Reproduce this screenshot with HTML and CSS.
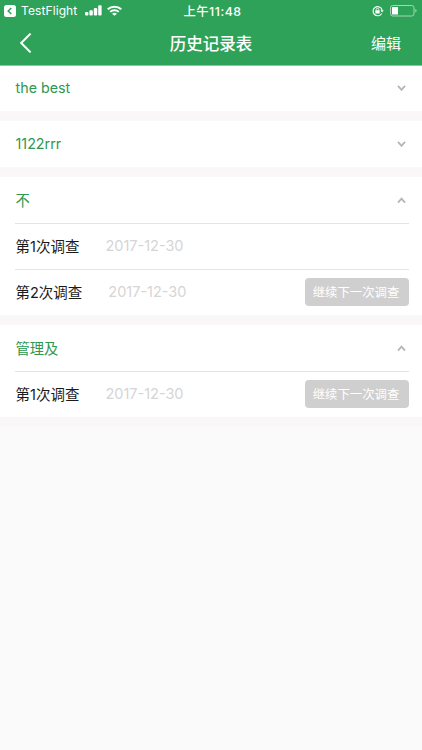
FILE: index.html
```html
<!DOCTYPE html>
<html lang="zh-CN">
<head>
    <meta charset="UTF-8">
    <meta name="viewport" content="width=device-width, initial-scale=1.0">
    <title>历史记录表</title>
    <link rel="stylesheet" href="styles.css">
</head>
<body>

<!-- ===== HEADER ===== -->
<header class="header">
    <div class="status-bar">
        <div class="status-left">
            <svg class="app-back" width="12" height="12" viewBox="0 0 12 12">
                <rect width="12" height="12" rx="2.5" fill="#fff"/>
                <path d="M7.3 3L4.2 6l3.1 3" fill="none" stroke="#2fa259" stroke-width="1.5"/>
            </svg>
            <span class="app-name">TestFlight</span>
            <svg class="signal" width="17" height="11" viewBox="0 0 17 11" fill="#fff">
                <rect x="0" y="7" width="3.4" height="3.6" rx="1"/>
                <rect x="4.4" y="5.2" width="3.4" height="5.4" rx="1"/>
                <rect x="8.8" y="3" width="3.4" height="7.6" rx="1"/>
                <rect x="13.2" y="0.3" width="3.4" height="10.3" rx="1"/>
            </svg>
            <svg class="wifi" width="15" height="11" viewBox="0 0 14 11" preserveAspectRatio="none" fill="none" stroke="#fff" stroke-width="2">
                <path d="M.7 4.2a9 9 0 0 1 12.6 0"/>
                <path d="M3 6.9a5.7 5.7 0 0 1 8 0"/>
                <path d="M7 10.8L4.7 8.7a3.1 3.1 0 0 1 4.6 0z" fill="#fff" stroke="none"/>
            </svg>
        </div>
        <div class="status-time">上午11:48</div>
        <div class="status-right">
            <svg class="lock" width="12" height="12" viewBox="0 0 12 12" fill="none" stroke="#fff">
                <path d="M9.7 8.4A4.6 4.6 0 1 1 10.1 5" stroke-width="1.1"/>
                <path d="M8.5 5.3h3.2L10.1 7.5z" fill="#fff" stroke="none"/>
                <rect x="3.3" y="5.3" width="4.4" height="3.1" rx=".4" fill="#fff" stroke="none"/>
                <path d="M4.2 5.5V4.6a1.3 1.3 0 0 1 2.6 0v.9" stroke-width=".9"/>
            </svg>
            <svg class="battery" width="27" height="12" viewBox="0 0 27 12">
                <rect x=".5" y=".5" width="23.5" height="10.5" rx="2.2" fill="none" stroke="#a5d7b6"/>
                <rect x="2" y="2" width="6" height="7.5" rx=".6" fill="#fff"/>
                <path d="M25.3 4v3.6q1.3-.5 1.3-1.8T25.3 4z" fill="#a5d7b6"/>
            </svg>
        </div>
    </div>
    <div class="nav-bar">
        <a class="nav-back">
            <svg width="12" height="20" viewBox="0 0 12 20" fill="none" stroke="#fff" stroke-width="2">
                <path d="M10.6 .6L1.2 10l9.4 9.4"/>
            </svg>
        </a>
        <h1 class="nav-title">历史记录表</h1>
        <a class="nav-edit">编辑</a>
    </div>
</header>

<!-- ===== RECORD LIST ===== -->
<main class="list">
    <section class="group">
        <div class="row">
            <span class="name">the best</span>
            <svg class="arrow" width="9" height="6" viewBox="0 0 9 6"><path d="M1 .8l3.5 4L8 .8"/></svg>
        </div>
    </section>

    <section class="group">
        <div class="row">
            <span class="name">1122rrr</span>
            <svg class="arrow" width="9" height="6" viewBox="0 0 9 6"><path d="M1 .8l3.5 4L8 .8"/></svg>
        </div>
    </section>

    <section class="group">
        <div class="row">
            <span class="name">不</span>
            <svg class="arrow" width="9" height="6" viewBox="0 0 9 6"><path d="M1 5.6l3.5-4L8 5.6"/></svg>
        </div>
        <div class="row">
            <span class="survey">第1次调查</span>
            <span class="date">2017-12-30</span>
        </div>
        <div class="row">
            <span class="survey">第2次调查</span>
            <span class="date">2017-12-30</span>
            <button class="next">继续下一次调查</button>
        </div>
    </section>

    <section class="group">
        <div class="row">
            <span class="name">管理及</span>
            <svg class="arrow" width="9" height="6" viewBox="0 0 9 6"><path d="M1 5.6l3.5-4L8 5.6"/></svg>
        </div>
        <div class="row">
            <span class="survey">第1次调查</span>
            <span class="date">2017-12-30</span>
            <button class="next">继续下一次调查</button>
        </div>
    </section>
</main>

</body>
</html>
```
FILE: styles.css
```css
:root {
    --green: #2fa259;
    --text-green: #2f9850;
    --gap: #f9f7f7;
    --line: #e4e4e4;
}
* {
    box-sizing: border-box;
}
body {
    margin: 0;
    min-height: 750px;
    background: #fafafa;
    font-family: Inter, "Noto Sans CJK SC", sans-serif;
    font-size: 14.5px;
    color: #1a1a1a;
}

/* header */
.header {
    position: relative;
    height: 65px;
    background: var(--green);
    box-shadow: 0 1px 0 #8acba3;
    color: #fff;
}
.status-bar {
    display: grid;
    grid-template-columns: 1fr auto 1fr;
    align-items: center;
    height: 21px;
    padding: 0 5px 0 4px;
}
.status-left, .status-right {
    display: flex;
    align-items: center;
}
.status-right {
    justify-content: flex-end;
    gap: 6px;
}
.app-name {
    width: 57px;
    margin: 0 7px 0 5px;
    font-size: 12px;
    letter-spacing: 0.1px;
}
.wifi {
    margin-left: 5px;
}
.status-time {
    padding-left: 4px;
    font-size: 12.3px;
    font-weight: 500;
    letter-spacing: 0.55px;
}
.nav-bar {
    display: grid;
    grid-template-columns: 1fr auto 1fr;
    align-items: center;
    height: 44px;
    padding: 0 21px 0 20px;
}
.nav-back {
    display: flex;
}
.nav-title {
    margin: 0;
    padding-left: 1px;
    font-size: 16.5px;
    font-weight: 500;
}
.nav-edit {
    justify-self: end;
    padding-bottom: 2px;
    font-size: 15px;
}

/* list */
.list {
    background: var(--gap);
}
.group {
    padding: 0 13px 0 15px;
    background: #fff;
    border-bottom: 10px solid var(--gap);
}
.row {
    display: flex;
    align-items: center;
    height: 46px;
}
.row + .row {
    border-top: 1px solid var(--line);
}
.name, .survey, .date {
    padding-bottom: 2px;
}
.name, .survey {
    padding-left: 0.5px;
}
.name {
    color: var(--text-green);
    font-size: 14.3px;
}
.arrow {
    margin-left: auto;
    margin-right: 3px;
    fill: none;
    stroke: #b5b5b5;
    stroke-width: 1.8;
}
.date {
    margin-left: 26px;
    color: #d5d5d5;
}
.next {
    width: 104px;
    height: 28px;
    margin-left: auto;
    margin-bottom: 2px;
    padding: 0 2px 0 0;
    border: none;
    border-radius: 4px;
    background: #cfcfcf;
    color: #fff;
    font-family: inherit;
    font-size: 12.4px;
}
```
